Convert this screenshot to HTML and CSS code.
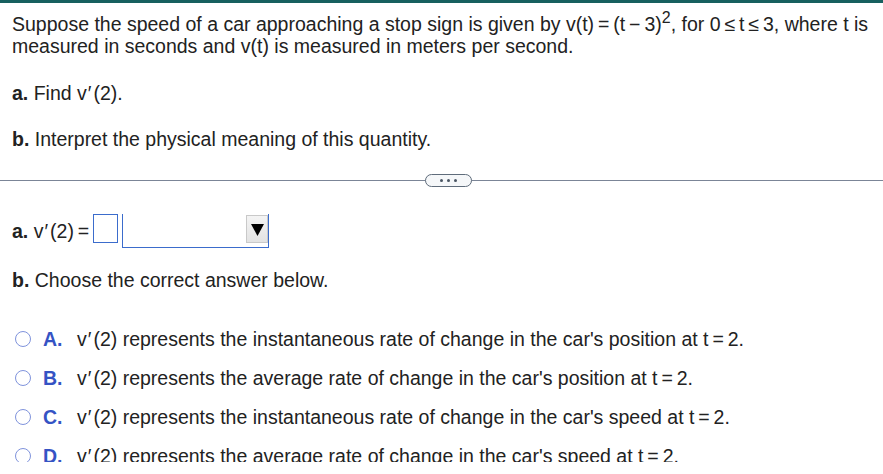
FILE: index.html
```html
<!DOCTYPE html>
<html>
<head>
<meta charset="utf-8">
<link rel="stylesheet" href="styles.css">
</head>
<body>
<div class="topbar"></div>
<div class="question">
  <p class="stem">Suppose the speed of a car approaching a stop sign is given by v(t)&#8201;=&#8201;(t&#8201;−&#8201;3)<sup>2</sup>, for 0&#8201;≤&#8201;t&#8201;≤&#8201;3, where t is measured in seconds and v(t) is measured in meters per second.</p>
  <p class="part"><b>a.</b> Find v<span class="pr">′</span>(2).</p>
  <p class="part"><b>b.</b> Interpret the physical meaning of this quantity.</p>
</div>
<div class="divider">
  <span class="pill"><i></i><i></i><i></i></span>
</div>
<div class="answer">
  <div class="row-a">
    <span class="lbl"><b>a.</b> v<span class="pr">′</span>(2)&#8201;=</span>
    <span class="box"></span>
    <span class="select"><span class="btn"><svg width="13" height="13" viewBox="0 0 12 12"><polygon points="0,1 12,1 6,12" fill="#000"/></svg></span></span>
  </div>
  <p class="part-b"><b>b.</b> Choose the correct answer below.</p>
  <ul class="opts">
    <li><span class="radio"></span><span class="let">A.</span><span>v<span class="pr">′</span>(2) represents the instantaneous rate of change in the car's position at t&#8201;=&#8201;2.</span></li>
    <li><span class="radio"></span><span class="let">B.</span><span>v<span class="pr">′</span>(2) represents the average rate of change in the car's position at t&#8201;=&#8201;2.</span></li>
    <li><span class="radio"></span><span class="let">C.</span><span>v<span class="pr">′</span>(2) represents the instantaneous rate of change in the car's speed at t&#8201;=&#8201;2.</span></li>
    <li><span class="radio"></span><span class="let">D.</span><span>v<span class="pr">′</span>(2) represents the average rate of change in the car's speed at t&#8201;=&#8201;2.</span></li>
  </ul>
</div>
</body>
</html>
```
FILE: styles.css
```css
html, body {
  margin: 0;
  padding: 0;
  background: #fff;
  height: 474px;
  overflow: hidden;
}
body {
  font-family: "Liberation Sans", Arial, sans-serif;
  font-size: 19.5px;
  color: #222;
  line-height: 22px;
}
.topbar {
  height: 3px;
  background: #17605f;
}
.question {
  padding: 10px 12px 0 12px;
}
.question p {
  margin: 0;
}
.pr {
  margin: 0 2px 0 1px;
}
sup {
  font-size: 16px;
  line-height: 0;
  vertical-align: 8px;
}
.question .part {
  margin-top: 25px;
}
.question .part + .part {
  margin-top: 24px;
}
.divider {
  position: relative;
  margin-top: 30px;
  height: 1px;
  background: #7b8597;
}
.pill {
  position: absolute;
  left: 425px;
  top: -6px;
  width: 45px;
  height: 11px;
  border: 1px solid #5f6c7b;
  border-radius: 7px;
  background: #f5f7f9;
  display: flex;
  justify-content: center;
  align-items: center;
  gap: 4px;
}
.pill i {
  width: 3px;
  height: 3px;
  border-radius: 50%;
  background: #4a5563;
}
.answer {
  padding: 33px 12px 0 12px;
  height: 248px;
  overflow: hidden;
}
.row-a {
  display: flex;
  align-items: flex-start;
  height: 34px;
}
.lbl {
  margin-top: 6px;
}
.box {
  width: 23px;
  height: 27px;
  border: 1px solid #3b6ccc;
  margin-left: 4px;
}
.select {
  width: 147px;
  height: 34px;
  border: 1px solid #3b6ccc;
  border-top: none;
  margin-left: 4px;
  position: relative;
  box-sizing: border-box;
}
.btn {
  position: absolute;
  right: 0;
  top: 1px;
  width: 22px;
  height: 28px;
  background: linear-gradient(#f4f4f4, #e3e3e3);
  border: 1px solid #c9c9c9;
  box-sizing: border-box;
  display: flex;
  align-items: center;
  justify-content: center;
}
.part-b {
  margin: 21px 0 0 0;
}
.opts {
  list-style: none;
  margin: 28px 0 0 0;
  padding: 0 0 0 3px;
}
.opts li {
  display: flex;
  align-items: center;
  height: 39px;
}
.radio {
  width: 14px;
  height: 14px;
  border: 1.5px solid #7f93dc;
  border-radius: 50%;
  box-sizing: content-box;
  margin-right: 12px;
}
.let {
  color: #3553c4;
  font-weight: bold;
  width: 34px;
}
```
